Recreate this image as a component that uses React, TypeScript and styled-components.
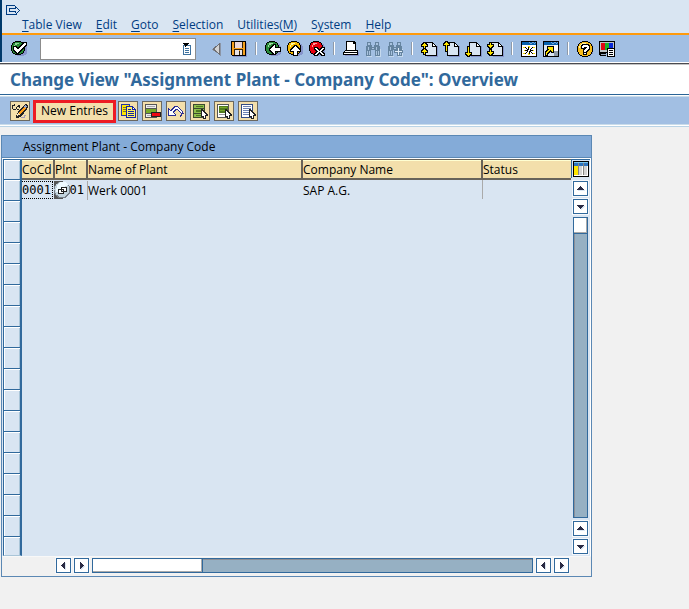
import React from "react";
import styled, { createGlobalStyle } from "styled-components";

const GlobalStyle = createGlobalStyle`
  *, *::before, *::after { box-sizing: border-box; }
  body {
    margin: 0;
    background: #f1f1f1;
    color: #000;
    font-family: "Open Sans", "Noto Sans", sans-serif;
    font-size: 12px;
    line-height: 16px;
  }
  button, input { font: inherit; color: inherit; padding: 0; margin: 0; border: 0; background: none; }
  svg { display: block; shape-rendering: crispEdges; }
`;

/* ---------- window frame ---------- */

const TopFrame = styled.header`
  border-left: 2px solid #00396b;
  background: #d9e5f2;
`;

const SystemButton = styled.button`
  display: block;
  margin-left: 4px;
  padding-top: 2px;
  height: 17px;
`;

const MenuBar = styled.nav`
  display: flex;
  gap: 14px;
  height: 16px;
  padding-left: 20px;
`;

const MenuItem = styled.button`
  color: #003c82;
  height: 16px;
  white-space: nowrap;
  u { text-underline-offset: 2px; }
`;

const StandardToolbar = styled.div`
  display: flex;
  align-items: center;
  height: 29px;
  padding-left: 8px;
  gap: 4px;
  border-top: 2px solid #ff9a0c;
  background: #a2bfe3;
`;

const IconButton = styled.button`
  flex: none;
  width: 18px;
  height: 18px;
`;

const CommandBox = styled.div`
  display: flex;
  align-items: center;
  flex: none;
  width: 156px;
  height: 22px;
  margin: 0 8px;
  padding-right: 2px;
  border: 1px solid #8c8c8c;
  background: #fff;
`;

const CommandInput = styled.input`
  flex: 1;
  min-width: 0;
  padding-left: 4px;
  outline: none;
`;

const HistoryButton = styled.button`
  width: 12px;
  height: 14px;
`;

const Divider = styled.span`
  flex: none;
  width: 2px;
  height: 13px;
  margin: 0 3px;
  border-left: 1px solid #8e99a8;
  border-right: 1px solid #fff;
`;

const TitleBar = styled.div`
  height: 33px;
  padding: 0 10px;
  border-top: 1px solid #fff;
  border-bottom: 1px solid #2a6496;
  background: #fff;
  box-shadow: inset 0 1px #4a4a50, inset 0 2px #c4c4c4;
`;

const Title = styled.h1`
  margin: 0;
  padding-top: 5px;
  color: #31699c;
  font-family: "Noto Sans", sans-serif;
  font-size: 17px;
  font-weight: 700;
  line-height: 24px;
  white-space: nowrap;
`;

const AppToolbar = styled.div`
  display: flex;
  align-items: center;
  gap: 4px;
  height: 32px;
  padding-left: 10px;
  border-top: 1px solid #fff;
  border-bottom: 1px solid #b9d3e6;
  background: #a2bfe3;
  box-shadow: inset 0 1px #c9dcea, inset 0 -1px #fff, inset 0 -2px #c9dcea;
`;

const ToolButton = styled.button`
  flex: none;
  display: grid;
  place-items: center;
  width: 20px;
  height: 20px;
  border: 1px solid #6b6860;
  background: #f3dfab;
`;

const NewEntriesButton = styled.button`
  flex: none;
  width: 83px;
  height: 23px;
  margin: 0 -2px 0 -1px;
  border: 3px solid #ed1c24;
  background: #f3dfab;
  white-space: nowrap;
`;

/* ---------- table control ---------- */

const Panel = styled.section`
  margin: 8px 97px 0 1px;
  border: 1px solid #5b88b4;
  background: #f1f1f1;
`;

const PanelTitle = styled.h2`
  margin: 0;
  height: 22px;
  padding-left: 21px;
  border-bottom: 1px solid #5b88b4;
  background: #84abd8;
  font-size: 12px;
  font-weight: 400;
  line-height: 22px;
`;

const GridArea = styled.div`
  display: flex;
  padding: 1px 1px 0;
  background: #d9e5f2;
  box-shadow: inset 0 1px #fff, inset -1px 0 #fff;
`;

const Table = styled.table`
  flex: 1;
  min-width: 0;
  width: 100%;
  table-layout: fixed;
  border-spacing: 0;
`;

const Col = styled.col<{ $w?: number }>`
  ${(p) => (p.$w ? `width: ${p.$w}px;` : "")}
`;

const HeadCell = styled.th<{ $last?: boolean }>`
  height: 21px;
  padding: 1px 0 0;
  border: solid #67635a;
  border-width: 1px ${(p) => (p.$last ? 0 : 2)}px 2px 0;
  background: #f3dfab;
  box-shadow: inset 0 1px #ffffd2;
  text-align: left;
  font-weight: 400;
  line-height: 16px;
  white-space: nowrap;
`;

const SelectCell = styled.td<{ $short?: boolean }>`
  height: ${(p) => (p.$short ? 19 : 21)}px;
  padding: 0;
  border: solid #31699c;
  border-width: 0 2px 1px 1px;
  border-bottom-color: ${(p) => (p.$short ? "#a9c5d8" : "#31699c")};
  box-shadow: inset 1px 1px #fff, inset -1px 0 #a9c5d8;
`;

const SelectAllCell = styled(SelectCell).attrs({ as: "th" })`
  border-top-width: 1px;
`;

const RowSelector = styled.button`
  display: block;
  width: 100%;
  height: 17px;
`;

const Cell = styled.td`
  padding: 0;
  vertical-align: top;
`;

const CellValue = styled.div<{ $line?: boolean }>`
  position: relative;
  height: 19px;
  line-height: 21px;
  border-right: ${(p) => (p.$line ? "1px solid #aaa" : "0")};
  white-space: nowrap;
`;

const KeyInput = styled.input<{ $focus?: boolean }>`
  display: block;
  width: 31px;
  height: 18px;
  margin-top: 1px;
  font-family: "DejaVu Sans Mono", monospace;
  font-size: 12px;
  outline: none;
  border: ${(p) => (p.$focus ? "1px dotted #000" : "0")};
  border-left: 0;
`;

const ValueHelp = styled.button`
  position: absolute;
  left: -1px;
  top: 0;
  width: 17px;
  height: 18px;
`;

const SideBar = styled.div`
  display: flex;
  flex-direction: column;
  align-items: center;
  gap: 3px;
  width: 19px;
  padding-bottom: 2px;
`;

const ConfigButton = styled.button`
  width: 19px;
  height: 19px;
  padding-left: 1px;
  border-left: 1px solid #31699c;
  border-top: 1px solid #31699c;
`;

const ArrowButton = styled.button`
  flex: none;
  display: grid;
  place-items: center;
  width: 15px;
  height: 15px;
  border: 1px solid #31699c;
  background: #fff;
  box-shadow: 0 0 0 1px #f6f8fb;
`;

const VTrack = styled.div`
  flex: 1;
  width: 15px;
  border: 1px solid #31699c;
  background: #96b0c3;
  box-shadow: inset 1px 0 #8b8f98;
`;

const VThumb = styled.div`
  height: 16px;
  background: #fff;
  border-bottom: 1px solid #31699c;
  box-shadow: inset -1px -1px #aaa;
`;

const HBar = styled.div`
  display: flex;
  gap: 3px;
  padding: 2px 22px 3px 54px;
  box-shadow: inset 0 1px #f8f8f8;
`;

const HTrack = styled.div`
  flex: 1;
  border: 1px solid #31699c;
  background: #96b0c3;
  box-shadow: inset 0 1px #8b8f98;
`;

const HThumb = styled.div`
  width: 25%;
  height: 100%;
  background: #fff;
  border-right: 1px solid #31699c;
  box-shadow: inset -1px -1px #aaa;
`;

/* ---------- icons ---------- */

const Icon = ({ children }: { children: React.ReactNode }) => (
  <svg width="18" height="18" viewBox="0 0 18 18" aria-hidden="true">
    {children}
  </svg>
);

const Outlined = ({ d, fill = "#fff" }: { d: string; fill?: string }) => (
  <>
    <path d={d} fill="#000" stroke="#000" strokeWidth="2" />
    <path d={d} fill={fill} />
  </>
);

const SystemIcon = () => (
  <svg width="15" height="12" viewBox="0 0 15 12" fill="#003c82" aria-hidden="true">
    <path d="M0 1h9v1H1v8h9V9h1v2H0zM3 4h6V2h1v1h1v1h1v1h1v1h1v1h-1v1h-1v1h-1V8h1V7h1V6h-1V5h-1V4h-1v1H4v2h6v2H9V8H3z" />
  </svg>
);

const Ball = ({ color, light }: { color: string; light: string }) => (
  <>
    <path d="M7 3h7v1h2v2h1v8h-1v1h-2v1H7z" fill="#8795cc" />
    <path d="M5 1h6v1h2v1h1v2h1v6h-1v2h-1v1h-2v1H5v-1H3v-1H2v-2H1V5h1V3h1V2h2z" fill="#000" />
    <path d="M5 2h6v1h2v2h1v6h-1v2h-2v1H5v-1H3v-2H2V5h1V3h2z" fill={color} />
    <path d="M5 3h4v1H7v1H5v2H4V5h1z" fill={light} />
  </>
);

const EnterIcon = () => (
  <Icon>
    <Ball color="#258a35" light="#91d397" />
    <Outlined d="M4 7h2v1h1v1h2V8h1V7h1V6h1V5h1V4h1V3h2v2h-1v1h-1v1h-1v1h-1v1h-1v1h-1v1h-1v1h-1v1H7v-1H6v-1H5v-1H4z" />
  </Icon>
);

const BackIcon = () => (
  <Icon>
    <Ball color="#288a38" light="#a6dca6" />
    <Outlined d="M6 9h1V8h1V7h1V6h1V5h1v3h5v3h-5v3h-1v-1H9v-1H8v-1H7v-1H6z" />
  </Icon>
);

const ExitIcon = () => (
  <Icon>
    <Ball color="#f5b800" light="#fff7a0" />
    <Outlined d="M9 6h1v1h1v1h1v1h1v1h1v1h-3v4H8v-4H5v-1h1V9h1V8h1V7h1z" />
  </Icon>
);

const CancelIcon = () => (
  <Icon>
    <Ball color="#e80010" light="#ff9a9a" />
    <Outlined d="M7 8h2v1h1v1h1v1h1v-1h1V9h1V8h2v1h-1v1h-1v1h-1v1h1v1h1v1h1v1h-2v-1h-1v-1h-1v-1h-1v1h-1v1H9v1H7v-1h1v-1h1v-1h1v-1H9v-1H8V9H7z" />
  </Icon>
);

const CollapseIcon = () => (
  <Icon>
    <path d="M13 3v13L4 9.500z" fill="#8b95a6" />
    <path d="M12 3v12L4 9z" fill="#6f6f72" />
    <path d="M11 5v8L6 9z" fill="#d3d3d3" />
  </Icon>
);

const SaveIcon = () => (
  <Icon>
    <path d="M3 3h14v14H3z" fill="#8795cc" />
    <path d="M1 1h15v15H2l-1-1z" fill="#000" />
    <path d="M2 2h3v6h7V2h3v13H2z" fill="#f6a01c" />
    <path d="M5 2h7v6H5z" fill="#ead7d9" />
    <path d="M4 2h1v6H4zM12 2h1v6h-1zM4 9h9v1H4zM4 10h1v5H4zM12 10h1v5h-1zM9 11h1v4H9z" fill="#33230c" />
    <path d="M5 10h4v5H5zM10 10h2v5h-2z" fill="#e9e4e6" />
  </Icon>
);

const PrintIcon = () => (
  <Icon>
    <path d="M3 12h14v4H3z" fill="#8795cc" />
    <path d="M4 1h8l2 2v7H4z" fill="#000" />
    <path d="M5 2h6v2h2v6H5z" fill="#fff" />
    <path d="M3 10h12l1 1v4H1v-3z" fill="#000" />
    <path d="M3 11h12v1H3zM2 13h13v1H2z" fill="#fff" />
  </Icon>
);

const Binoculars = ({ plus }: { plus?: boolean }) => (
  <Icon>
    <path d="M3 16h5v1H3zM12 16h5v1h-5zM16 9h1v7h-1z" fill="#c5d9ee" />
    <path d="M3 2h4v3h1v2h2V5h1V2h4v4h1v10h-5v-6H7v6H2V6h1z" fill="#6584a0" />
    <path d="M4 3h2v2H4zM12 3h2v2h-2zM4 7h1v3H4zM3 11h1v4H3zM5 11h1v4H5zM8 8h2v1H8zM12 11h1v4h-1zM14 11h1v4h-1zM12 7h1v3h-1z" fill="#a9c3df" />
    {plus && (
      <>
        <path d="M11 7h3v3h3v3h-3v3h-3v-3H8v-3h3z" fill="#6584a0" />
        <path d="M12 8h1v3h3v1h-3v3h-1v-3H9v-1h3z" fill="#e1edf8" />
      </>
    )}
  </Icon>
);

const YELLOW = "#ffe600";
const SMALL_UP = "M4 3h1v1h1v1h1v1H5v2H4V6H2V5h1V4h1z";
const SMALL_DOWN = "M4 3h1v2h2v1H6v1H5v1H4V7H3V6H2V5h2z";

const PageIcon = ({ kind }: { kind: "first" | "prev" | "next" | "last" }) => (
  <Icon>
    <path d="M7 6h11v11H7z" fill="#8795cc" />
    <path d="M5 2h8v1h1v1h1v1h1v1h1v10H5z" fill="#000" />
    <path d="M6 3h6v4h4v8H6z" fill="#d9e5f2" />
    <path d="M13 4h1v1h1v1h-2z" fill="#fff" />
    {kind === "first" && (
      <>
        <Outlined d={SMALL_UP} fill={YELLOW} />
        <g transform="translate(0 6)"><Outlined d={SMALL_UP} fill={YELLOW} /></g>
      </>
    )}
    {kind === "prev" && <Outlined d="M4 2h1v1h1v1h1v1H5v6H4V5H2V4h1V3h1z" fill={YELLOW} />}
    {kind === "next" && <Outlined d="M4 7h1v6h2v1H6v1H5v1H4v-1H3v-1H2v-1h2z" fill={YELLOW} />}
    {kind === "last" && (
      <>
        <Outlined d={SMALL_DOWN} fill={YELLOW} />
        <g transform="translate(0 7)"><Outlined d={SMALL_DOWN} fill={YELLOW} /></g>
      </>
    )}
  </Icon>
);

const WindowFrame = ({ children }: { children: React.ReactNode }) => (
  <Icon>
    <path d="M1 1h16v16H1z" fill="#000" />
    <path d="M2 5h14v11H2z" fill="#fff" />
    <path d="M2 2h14v3H2z" fill="#0862ad" />
    <path d="M8 2h1v1h1v1h1V3h1V2h1v1h1v1h1V3h1V2h-1v1h-1V2h-1v1h-1v1h-1V3h-1V2z" fill="#7ba7d3" />
    {children}
  </Icon>
);

const NewSessionIcon = () => (
  <WindowFrame>
    <path d="M3 7h2v1H3zM13 7h2v1h-2zM3 13h2v1H3zM13 13h2v1h-2zM8 6h2v2H8zM8 13h2v2H8zM4 10h2v1H4zM12 10h2v1h-2z" fill="#f4dd00" />
    <path d="M8 7h1v3H8zM9 11h1v3H9zM5 7h1v1H5zM6 8h1v1H6zM7 9h1v1H7zM12 7h1v1h-1zM11 8h1v1h-1zM10 9h1v1h-1zM5 10h3v1H5zM10 10h3v1h-3zM7 11h1v1H7zM6 12h1v1H6zM5 13h1v1H5zM10 11h1v1h-1zM11 12h1v1h-1zM12 13h1v1h-1z" fill="#000" />
  </WindowFrame>
);

const ShortcutIcon = () => (
  <WindowFrame>
    <path d="M12 11h4v5h-4z" fill="#8d9aa8" />
    <path d="M2 5h10v11H2z" fill="#d9e5f2" />
    <Outlined fill={YELLOW} d="M6 7h5v5h-1v-1H9v-1H8v1H7v1H6v1H5v2H4v-3h1v-1h1v-1h1V9H6z" />
  </WindowFrame>
);

const HelpIcon = () => (
  <Icon>
    <path d="M7 4h8v1h2v9h-2v2H7z" fill="#8795cc" />
    <path d="M6 1h6v1h2v1h1v1h1v2h1v6h-1v2h-1v1h-1v1h-2v1H6v-1H4v-1H3v-1H2v-2H1V6h1V4h1V3h1V2h2z" fill="#000" />
    <path d="M6 2h6v1h2v1h1v2h1v6h-1v2h-1v1h-2v1H6v-1H4v-1H3v-2H2V6h1V4h1V3h2z" fill="#f8bd1b" />
    <path d="M6 3h4v1H6v1H5v1H4v2H3V6h1V5h1V4h1z" fill="#fff4a8" />
    <Outlined d="M6 6h1V5h5v1h1v3h-1v1h-1v1h-1v1H8v-2h1V9h1V8h1V7H8v1H6zM8 13h2v1H8z" />
  </Icon>
);

const LayoutIcon = () => (
  <Icon>
    <path d="M1 1h16v12H1z" fill="#000" />
    <path d="M2 2h14v10H2z" fill="#bfc5c8" />
    <path d="M3 3h4v7H3z" fill="#e10613" />
    <path d="M7 3h4v7H7z" fill="#1ab32b" />
    <path d="M11 3h4v7h-4z" fill="#0828d8" />
    <path d="M1 13h7v3H2z" fill="#000" />
    <path d="M3 14h5v1H3z" fill="#9aabc0" />
    <path d="M9 8h8v9H9z" fill="#000" />
    <path d="M10 9h6v7h-6z" fill="#fff" />
    <path d="M11 10h4v1h-4zM11 12h4v1h-4zM11 14h4v1h-4z" fill="#000" />
  </Icon>
);

const HistoryIcon = () => (
  <svg width="12" height="14" viewBox="0 0 12 14" aria-hidden="true">
    <path d="M2 3h8v10H2z" fill="#3e729f" />
    <path d="M3 4h6v8H3z" fill="#fff" />
    <path d="M4 6h4v1H4zM4 8h4v1H4zM4 10h4v1H4z" fill="#3e729f" />
    <path d="M2 1h6v1H7v1H6v1H5v1H4V3H3V2H2z" fill="#000" />
  </svg>
);

const PencilIcon = () => (
  <Icon>
    <path d="M1 3h2v1H1zM3 2h1v2H3zM1 4h1v3H1zM2 7h3v1H2zM5 5h1v2H5zM6 4h2v1H6zM7 3h2v1H7zM8 4h1v2H8zM6 7h2v1H6z" fill="#222" />
    <path d="M14 2h2v1h1v3h-1v2h-1v1h-1v1h-1v2h-1v1h-1v1h-1v1H8v1H5v-3h1v-2h1V9h1V8h1V7h1V6h1V5h1V4h1V3h1z" fill="#222" />
    <path d="M13 5h2v2h-1v1h-1v1h-1v1h-1v1h-1v1H8v-2h1V9h1V8h1V7h1V6h1z" fill="#ff9c18" />
    <path d="M14 3h1v1h1v1h-1v1h-1V5h-1V4h1z" fill="#94a8d5" />
    <path d="M7 11h1v1h1v1H7v1H6v-2h1z" fill="#ffe7b8" />
    <path d="M10 15h3v-2h2v1h-1v2h-4z" fill="#a79bb6" />
  </Icon>
);

const CopyIcon = () => (
  <Icon>
    <path d="M2 2h9v12H2z" fill="#2233a6" />
    <path d="M3 3h7v10H3z" fill="#ffe600" />
    <path d="M4 5h4v1H4zM4 7h4v1H4zM4 9h4v1H4z" fill="#7c7430" />
    <path d="M7 4h7v1h1v1h1v1h1v9H7z" fill="#1524a4" />
    <path d="M8 5h5v3h3v7H8z" fill="#fff25e" />
    <path d="M14 6h1v1h-1z" fill="#fff" />
    <path d="M9 7h3v1H9zM9 9h6v1H9zM9 11h6v1H9zM9 13h6v1H9z" fill="#1524a4" />
  </Icon>
);

const DeleteRowIcon = () => (
  <Icon>
    <path d="M2 2h12v14H2z" fill="#555" />
    <path d="M3 3h10v3H3zM3 12h10v3H3z" fill="#eee" />
    <path d="M4 4h8v1H4zM4 13h6v1H4z" fill="#aaa" />
    <path d="M3 7h10v4H3z" fill="#76a928" />
    <path d="M8 10h10v5H8z" fill="#222" />
    <path d="M9 11h8v3H9z" fill="#ee0712" />
  </Icon>
);

const UndoIcon = () => (
  <Icon>
    <path d="M1 6h1v1h1v1h1V7h1V6h1V5h1V4h4v1h1v1h1v1h1v1h1v1h1v2h1v1h-2v2h-1v1h-1v-2h1v-2h-1v-1h-1V9h-1V8h-2v1H8v1H7v1h1v1h1v2H1z" fill="#292c94" />
    <path d="M2 8h1v1h2V8h1V7h1V6h1V5h3v1h1v1h1v1h1v1h1v2h-1v-1h-1V9h-1V8h-1V7H8v1H7v1H6v2h1v1h1v1H2z" fill="#fff" />
  </Icon>
);

const Pointer = () => (
  <>
    <path d="M10 7h2v1h1v1h1v1h1v1h1v1h1v2h-2v3h-3v-2h-2z" fill="#222" />
    <path d="M11 9h1v1h1v1h1v1h1v1h-1v3h-1v-2h-2z" fill="#fff" />
  </>
);

const SelectAllIcon = () => (
  <Icon>
    <path d="M2 2h12v14H2z" fill="#3d4b30" />
    <path d="M3 3h10v3H3zM3 7h10v4H3zM3 12h10v3H3z" fill="#8fbe4c" />
    <path d="M5 4h7v1H5zM5 8h7v2H5zM5 13h7v1H5z" fill="#4d7922" />
    <Pointer />
  </Icon>
);

const SelectBlockIcon = () => (
  <Icon>
    <path d="M2 2h12v14H2z" fill="#555" />
    <path d="M3 3h10v12H3z" fill="#fff" />
    <path d="M4 4h9v7H4z" fill="#527b1e" />
    <path d="M5 5h7v1H5zM5 8h7v1H5z" fill="#76a928" />
    <path d="M4 12h7v1H4z" fill="#999" />
    <Pointer />
  </Icon>
);

const DeselectIcon = () => (
  <Icon>
    <path d="M2 2h12v14H2z" fill="#334c84" />
    <path d="M3 3h10v12H3z" fill="#fff" />
    <path d="M4 4h8v1H4zM4 6h8v1H4zM4 8h8v1H4zM4 10h8v1H4zM4 12h8v1H4z" fill="#6c82b2" />
    <Pointer />
  </Icon>
);

const ConfigIcon = () => (
  <svg width="16" height="16" viewBox="0 0 16 16" aria-hidden="true">
    <path d="M0 0h16v16H0z" fill="#000" />
    <path d="M1 1h14v14H1z" fill="#fff" />
    <path d="M1 1h14v4H1z" fill="#2d73bd" />
    <path d="M1 1h14v1H1z" fill="#7cc7ee" />
    <path d="M1 5h4v9H1z" fill="#ffe600" />
    <path d="M6 5h3v9H6zM11 5h3v9h-3z" fill="#d3d3d3" />
    <path d="M5 2h1v12H5zM10 2h1v12h-1z" fill="#878783" />
  </svg>
);

const ValueHelpIcon = () => (
  <svg width="17" height="18" viewBox="0 0 17 18" aria-hidden="true">
    <path d="M0 0h9v18H0z" fill="#555" />
    <circle cx="8" cy="9" r="8.500" fill="#777f88" />
    <circle cx="8" cy="8.500" r="7.500" fill="#c3d4de" />
    <path d="M3 4l4-3h4l3 3-4 2-5 4-3 1z" fill="#eef9ff" />
    <path d="M7.500 6.500h5v4h-5zM4.500 8.500h5v4h-5z" fill="#fff" stroke="#222" />
  </svg>
);

const turns = { up: 0, right: 90, down: 180, left: 270 };

const Arrow = ({ dir }: { dir: keyof typeof turns }) => (
  <svg width="13" height="13" viewBox="0 0 13 13" aria-hidden="true">
    <g transform={`translate(1 1) rotate(${turns[dir]} 6.500 6.500)`}>
      <path d="M6 4h1v1h1v1h1v1h1v1H3V7h1V6h1V5h1z" fill="#d9e5f2" />
    </g>
    <g transform={`rotate(${turns[dir]} 6.500 6.500)`}>
      <path d="M6 4h1v1h1v1h1v1h1v1H3V7h1V6h1V5h1z" fill="#292a43" />
    </g>
  </svg>
);

/* ---------- data ---------- */

const menus: [string, string, string][] = [
  ["", "T", "able View"],
  ["", "E", "dit"],
  ["", "G", "oto"],
  ["", "S", "election"],
  ["Utilities(", "M", ")"],
  ["S", "y", "stem"],
  ["", "H", "elp"],
];

const groups: { label: string; icon: React.ReactNode }[][] = [
  [
    { label: "Hide command field", icon: <CollapseIcon /> },
    { label: "Save", icon: <SaveIcon /> },
  ],
  [
    { label: "Back", icon: <BackIcon /> },
    { label: "Exit", icon: <ExitIcon /> },
    { label: "Cancel", icon: <CancelIcon /> },
  ],
  [
    { label: "Print", icon: <PrintIcon /> },
    { label: "Find", icon: <Binoculars /> },
    { label: "Find next", icon: <Binoculars plus /> },
  ],
  [
    { label: "First page", icon: <PageIcon kind="first" /> },
    { label: "Previous page", icon: <PageIcon kind="prev" /> },
    { label: "Next page", icon: <PageIcon kind="next" /> },
    { label: "Last page", icon: <PageIcon kind="last" /> },
  ],
  [
    { label: "New session", icon: <NewSessionIcon /> },
    { label: "Create shortcut", icon: <ShortcutIcon /> },
  ],
  [
    { label: "Help", icon: <HelpIcon /> },
    { label: "Customize layout", icon: <LayoutIcon /> },
  ],
];

const tools: { label: string; icon: React.ReactNode }[] = [
  { label: "Copy as", icon: <CopyIcon /> },
  { label: "Delete", icon: <DeleteRowIcon /> },
  { label: "Undo change", icon: <UndoIcon /> },
  { label: "Select all", icon: <SelectAllIcon /> },
  { label: "Select block", icon: <SelectBlockIcon /> },
  { label: "Deselect all", icon: <DeselectIcon /> },
];

const emptyRows = Array.from({ length: 17 }, (_, i) => i + 2);

export default function App() {
  return (
    <>
      <GlobalStyle />
      <TopFrame>
        <SystemButton aria-label="Window menu"><SystemIcon /></SystemButton>
        <MenuBar>
          {menus.map(([before, key, after]) => (
            <MenuItem key={before + key + after}>{before}<u>{key}</u>{after}</MenuItem>
          ))}
        </MenuBar>
        <StandardToolbar>
          <IconButton aria-label="Enter"><EnterIcon /></IconButton>
          <CommandBox>
            <CommandInput aria-label="Command" />
            <HistoryButton aria-label="Command history"><HistoryIcon /></HistoryButton>
          </CommandBox>
          {groups.map((group, i) => (
            <React.Fragment key={i}>
              {i > 0 && <Divider />}
              {group.map((b) => (
                <IconButton key={b.label} aria-label={b.label}>{b.icon}</IconButton>
              ))}
            </React.Fragment>
          ))}
        </StandardToolbar>
      </TopFrame>
      <TitleBar>
        <Title>Change View "Assignment Plant - Company Code": Overview</Title>
      </TitleBar>
      <AppToolbar>
        <ToolButton aria-label="Display or change"><PencilIcon /></ToolButton>
        <NewEntriesButton>New Entries</NewEntriesButton>
        {tools.map((t) => (
          <ToolButton key={t.label} aria-label={t.label}>{t.icon}</ToolButton>
        ))}
      </AppToolbar>
      <Panel>
        <PanelTitle>Assignment Plant - Company Code</PanelTitle>
        <GridArea>
          <Table>
            <colgroup>
              <Col $w={19} /><Col $w={33} /><Col $w={33} /><Col $w={215} /><Col $w={180} /><Col />
            </colgroup>
            <thead>
              <tr>
                <SelectAllCell><RowSelector aria-label="Select all rows" /></SelectAllCell>
                <HeadCell>CoCd</HeadCell>
                <HeadCell>Plnt</HeadCell>
                <HeadCell>Name of Plant</HeadCell>
                <HeadCell>Company Name</HeadCell>
                <HeadCell $last>Status</HeadCell>
              </tr>
            </thead>
            <tbody>
              <tr>
                <SelectCell><RowSelector aria-label="Select row 1" /></SelectCell>
                <Cell><KeyInput $focus aria-label="CoCd" defaultValue="0001" /></Cell>
                <Cell>
                  <CellValue $line>
                    <KeyInput aria-label="Plnt" defaultValue="0001" />
                    <ValueHelp aria-label="Value help"><ValueHelpIcon /></ValueHelp>
                  </CellValue>
                </Cell>
                <Cell><CellValue>Werk 0001</CellValue></Cell>
                <Cell><CellValue $line>SAP A.G.</CellValue></Cell>
                <Cell />
              </tr>
              {emptyRows.map((n) => (
                <tr key={n}>
                  <SelectCell $short={n === 18}><RowSelector aria-label={`Select row ${n}`} /></SelectCell>
                  <Cell /><Cell /><Cell /><Cell /><Cell />
                </tr>
              ))}
            </tbody>
          </Table>
          <SideBar>
            <ConfigButton aria-label="Table settings"><ConfigIcon /></ConfigButton>
            <ArrowButton aria-label="Scroll up"><Arrow dir="up" /></ArrowButton>
            <ArrowButton aria-label="Next line"><Arrow dir="down" /></ArrowButton>
            <VTrack><VThumb /></VTrack>
            <ArrowButton aria-label="Previous line"><Arrow dir="up" /></ArrowButton>
            <ArrowButton aria-label="Scroll down"><Arrow dir="down" /></ArrowButton>
          </SideBar>
        </GridArea>
        <HBar>
          <ArrowButton aria-label="Scroll left"><Arrow dir="left" /></ArrowButton>
          <ArrowButton aria-label="Next column"><Arrow dir="right" /></ArrowButton>
          <HTrack><HThumb /></HTrack>
          <ArrowButton aria-label="Previous column"><Arrow dir="left" /></ArrowButton>
          <ArrowButton aria-label="Scroll right"><Arrow dir="right" /></ArrowButton>
        </HBar>
      </Panel>
    </>
  );
}
